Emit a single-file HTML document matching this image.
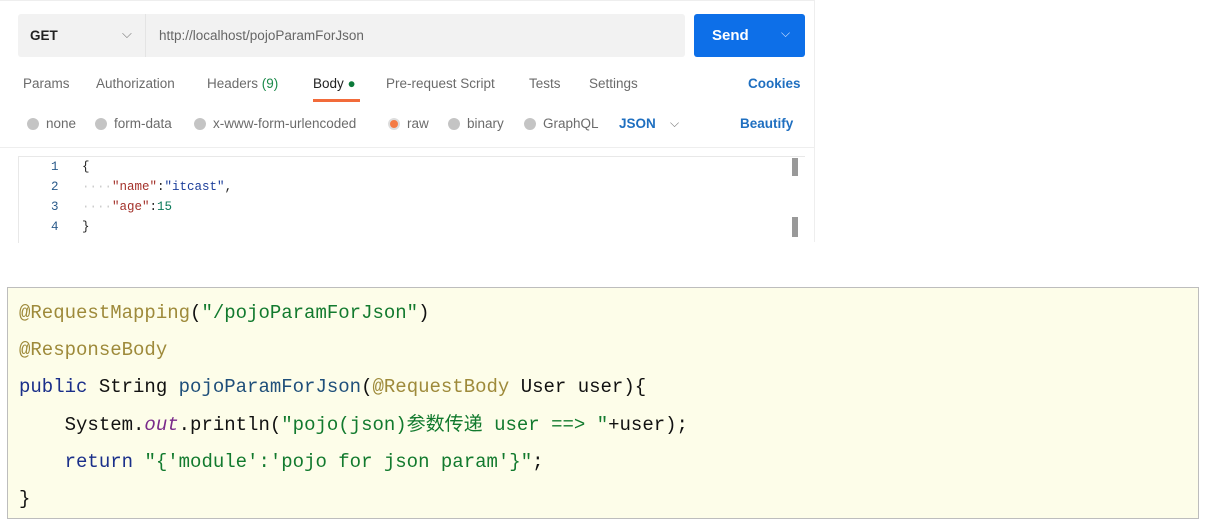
<!DOCTYPE html>
<html><head><meta charset="utf-8"><style>
*{margin:0;padding:0;box-sizing:border-box}
body{width:1206px;height:526px;background:#fff;position:relative;overflow:hidden;font-family:"Liberation Sans",Arial,sans-serif}
.a{position:absolute;white-space:pre}
.pm{position:absolute;left:0;top:0;width:815px;height:242px;background:#fff;border-top:1px solid #eee;border-right:1px solid #eee}
.url{position:absolute;left:18px;top:13px;width:667px;height:43px;background:#f2f2f2;border-radius:3px}
.send{position:absolute;left:694px;top:13px;width:111px;height:43px;background:#0d6fe8;border-radius:3px}
.t{font-size:13.5px;color:#6b6b6b}
.dot{position:absolute;width:12px;height:12px;border-radius:6px;background:#c4c4c4}
.m{font-family:"Liberation Mono",monospace;font-size:12.5px}
.cb{position:absolute;left:7px;top:287px;width:1192px;height:232px;background:#fdfde9;border:1px solid #bdbdbd}
.c{font-family:"Liberation Mono","Noto Sans CJK SC",monospace;font-size:19px;line-height:24px;height:24px;color:#111;left:19px}
.an{color:#9e8a3a}.s{color:#127a2e}.k{color:#1a2f8a}.i{color:#7a2a8a;font-style:italic}.fn{color:#1f4f7a}
</style></head><body>
<div class="pm">
<div class="url"></div>
<div class="a" style="left:145px;top:13px;width:1px;height:43px;background:#e4e4e4"></div>
<div class="a" style="left:30px;top:27px;font-size:13.5px;font-weight:bold;color:#222">GET</div>
<div class="a" style="left:122px;top:25px;font-size:13px;color:#777">⌵</div>
<div class="a" style="left:159px;top:27px;font-size:13.5px;color:#666">http://localhost/pojoParamForJson</div>
<div class="send"></div>
<div class="a" style="left:712px;top:26px;font-size:15px;font-weight:bold;color:#fff">Send</div>
<div class="a" style="left:781px;top:25px;font-size:12px;color:#cfe2ff">⌵</div>
<div class="a t" style="left:23px;top:75px">Params</div>
<div class="a t" style="left:96px;top:75px">Authorization</div>
<div class="a t" style="left:207px;top:75px">Headers <span style="color:#1b8a4a">(9)</span></div>
<div class="a t" style="left:313px;top:75px;color:#222">Body <span style="color:#0b7a3a">●</span></div>
<div class="a" style="left:313px;top:98px;width:47px;height:3px;background:#f26b3a"></div>
<div class="a t" style="left:386px;top:75px">Pre-request Script</div>
<div class="a t" style="left:529px;top:75px">Tests</div>
<div class="a t" style="left:589px;top:75px">Settings</div>
<div class="a t" style="left:748px;top:75px;color:#1f6fc0;font-weight:bold">Cookies</div>
<div class="dot" style="left:27px;top:117px"></div><div class="a t" style="left:46px;top:115px">none</div>
<div class="dot" style="left:95px;top:117px"></div><div class="a t" style="left:114px;top:115px">form-data</div>
<div class="dot" style="left:194px;top:117px"></div><div class="a t" style="left:213px;top:115px">x-www-form-urlencoded</div>
<div class="dot" style="left:388px;top:117px;background:#f47b45;border:2px solid #ddd"></div><div class="a t" style="left:407px;top:115px">raw</div>
<div class="dot" style="left:448px;top:117px"></div><div class="a t" style="left:467px;top:115px">binary</div>
<div class="dot" style="left:524px;top:117px"></div><div class="a t" style="left:543px;top:115px">GraphQL</div>
<div class="a t" style="left:619px;top:115px;color:#1f6fc0;font-weight:bold">JSON</div>
<div class="a" style="left:670px;top:115px;font-size:12px;color:#777">⌵</div>
<div class="a t" style="left:740px;top:115px;color:#1f6fc0;font-weight:bold">Beautify</div>
<div class="a" style="left:0;top:146px;width:815px;height:1px;background:#eee"></div>
<div class="a" style="left:18px;top:155px;width:787px;height:1px;background:#e8e8e8"></div>
<div class="a" style="left:18px;top:155px;width:1px;height:87px;background:#e8e8e8"></div>
<div class="a" style="left:792px;top:157px;width:6px;height:18px;background:#999"></div>
<div class="a" style="left:792px;top:216px;width:6px;height:20px;background:#999"></div>
<div class="a m" style="left:51px;top:156px;color:#2a5a8a;line-height:20px">1
2
3
4</div>
<div class="a m" style="left:82px;top:156px;line-height:20px;color:#222">{
<span style="color:#ccc">····</span><span style="color:#a3312a">"name"</span>:<span style="color:#1c3e9a">"itcast"</span>,
<span style="color:#ccc">····</span><span style="color:#a3312a">"age"</span>:<span style="color:#0b7a5a">15</span>
}</div>
</div>
<div class="cb"></div>
<div class="a c" style="top:301px"><span class="an">@RequestMapping</span>(<span class="s">"/pojoParamForJson"</span>)</div>
<div class="a c" style="top:338px"><span class="an">@ResponseBody</span></div>
<div class="a c" style="top:375px"><span class="k">public</span> String <span class="fn">pojoParamForJson</span>(<span class="an">@RequestBody</span> User user){</div>
<div class="a c" style="top:413px">    System.<span class="i">out</span>.println(<span class="s">"pojo(json)参数传递 user ==> "</span>+user);</div>
<div class="a c" style="top:450px">    <span class="k">return</span> <span class="s">"{'module':'pojo for json param'}"</span>;</div>
<div class="a c" style="top:487px">}</div>
</body></html>
